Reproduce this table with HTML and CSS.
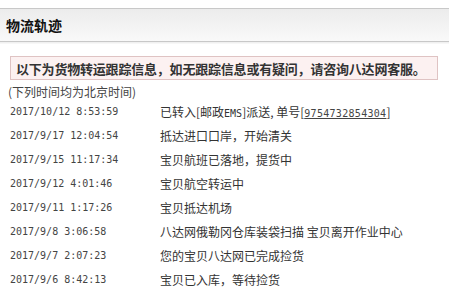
FILE: index.html
```html
<!DOCTYPE html>
<html lang="zh-CN">
<head>
<meta charset="utf-8">
<link rel="stylesheet" href="styles.css">
</head>
<body>
<div class="panel">
  <div class="panel-head"><h2 class="panel-title">物流轨迹</h2></div>
  <div class="notice">以下为货物转运跟踪信息，如无跟踪信息或有疑问，请咨询八达网客服。</div>
  <div class="tz-note">(下列时间均为北京时间)</div>
  <ul class="track">
    <li class="track-row"><span class="track-time">2017/10/12 8:53:59</span><span class="track-desc">已转入[邮政<span class="lat">EMS</span>]派送, 单号[<a class="track-no">9754732854304</a>]</span></li>
    <li class="track-row"><span class="track-time">2017/9/17 12:04:54</span><span class="track-desc">抵达进口口岸，开始清关</span></li>
    <li class="track-row"><span class="track-time">2017/9/15 11:17:34</span><span class="track-desc">宝贝航班已落地，提货中</span></li>
    <li class="track-row"><span class="track-time">2017/9/12 4:01:46</span><span class="track-desc">宝贝航空转运中</span></li>
    <li class="track-row"><span class="track-time">2017/9/11 1:17:26</span><span class="track-desc">宝贝抵达机场</span></li>
    <li class="track-row"><span class="track-time">2017/9/8 3:06:58</span><span class="track-desc">八达网俄勒冈仓库装袋扫描 宝贝离开作业中心</span></li>
    <li class="track-row"><span class="track-time">2017/9/7 2:07:23</span><span class="track-desc">您的宝贝八达网已完成捡货</span></li>
    <li class="track-row"><span class="track-time">2017/9/6 8:42:13</span><span class="track-desc">宝贝已入库，等待捡货</span></li>
  </ul>
</div>
</body>
</html>
```
FILE: styles.css
```css
html, body {
  margin: 0;
  padding: 0;
  background: #fff;
}
body {
  padding-top: 8px;
  font-family: "Noto Sans CJK SC", "Liberation Sans", sans-serif;
  color: #333;
  font-size: 12px;
}
.panel-head {
  height: 32px;
  border-top: 1px solid #c8c8c8;
  border-bottom: 1px solid #c8c8c8;
  background: linear-gradient(#ececec, #f9f9f9);
  display: flex;
  align-items: center;
  padding-left: 6px;
  box-shadow: 0 1px 0 #f0f0f0, 0 2px 0 #f7f7f7;
}
.panel-title {
  margin: 0;
  font-size: 14px;
  font-weight: 700;
  color: #111;
  line-height: 1;
}
.notice {
  margin: 14px 0 0 10px;
  width: 421px;
  height: 22px;
  border: 1px solid #dfc3c3;
  background: #fcf1f1;
  padding-left: 5px;
  display: flex;
  align-items: center;
  font-size: 13px;
  font-weight: 700;
  color: #333;
  letter-spacing: -0.2px;
  white-space: nowrap;
}
.tz-note {
  margin-top: 2px;
  height: 17px;
  line-height: 19px;
  padding-left: 8px;
  color: #444;
}
.track {
  list-style: none;
  margin: 0;
  padding: 0;
}
.track-row {
  display: flex;
  align-items: center;
  height: 24px;
}
.track-time {
  width: 150px;
  padding-left: 10px;
  font-family: "DejaVu Sans Mono", monospace;
  font-size: 10px;
  color: #444;
}
.track-desc {
  color: #333;
  white-space: nowrap;
}
.lat {
  font-family: "DejaVu Sans Mono", monospace;
  font-size: 10px;
}
.track-no {
  font-family: "DejaVu Sans Mono", monospace;
  font-size: 10px;
  color: #444;
  text-decoration: underline;
  letter-spacing: 0.3px;
}
```
